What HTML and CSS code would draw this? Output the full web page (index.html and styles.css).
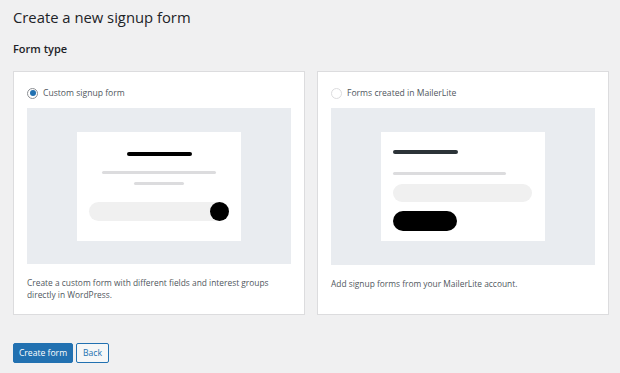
FILE: index.html
```html
<!DOCTYPE html>
<html lang="en">
<head>
<meta charset="utf-8">
<title>Create a new signup form</title>
<link rel="stylesheet" href="styles.css">
</head>
<body>
<div class="wrap">
  <h1 class="title">Create a new signup form</h1>
  <h2 class="subtitle">Form type</h2>
  <div class="cards">
    <label class="card">
      <span class="option"><span class="radio checked"></span><span class="option-label">Custom signup form</span></span>
      <span class="preview">
        <span class="mock mock-custom">
          <span class="bar bar-black"></span>
          <span class="bar bar-gray1"></span>
          <span class="bar bar-gray2"></span>
          <span class="pill-row"><span class="pill-dot"></span></span>
        </span>
      </span>
      <span class="desc">Create a custom form with different fields and interest groups directly in WordPress.</span>
    </label>
    <label class="card">
      <span class="option"><span class="radio"></span><span class="option-label">Forms created in MailerLite</span></span>
      <span class="preview">
        <span class="mock mock-ml">
          <span class="bar bar-dark"></span>
          <span class="bar bar-gray3"></span>
          <span class="pill-input"></span>
          <span class="pill-btn"></span>
        </span>
      </span>
      <span class="desc">Add signup forms from your MailerLite account.</span>
    </label>
  </div>
  <div class="actions">
    <button class="btn btn-primary" type="button">Create form</button>
    <button class="btn btn-secondary" type="button">Back</button>
  </div>
</div>
</body>
</html>
```
FILE: styles.css
```css
html, body {
  margin: 0;
  padding: 0;
  background: #f0f0f1;
}
body {
  font-family: "Open Sans", "Noto Sans", sans-serif;
  color: #1d2327;
}
.wrap {
  padding: 6px 13px 0 13px;
}
.title {
  margin: 0;
  font-size: 14.8px;
  font-weight: 400;
  line-height: 22px;
  color: #1d2327;
}
.subtitle {
  margin: 13px 0 0 0;
  font-size: 11px;
  font-weight: 600;
  line-height: 16px;
  color: #1d2327;
}
.cards {
  margin-top: 14px;
  display: grid;
  grid-template-columns: 292px 292px;
  column-gap: 12px;
}
.card {
  display: flex;
  flex-direction: column;
  background: #fff;
  border: 1px solid #dcdcde;
  padding: 13px;
  height: 244px;
  box-sizing: border-box;
}
.option {
  display: flex;
  align-items: center;
  gap: 5px;
  height: 16px;
}
.radio {
  width: 11px;
  height: 11px;
  box-sizing: border-box;
  border: 1px solid #dcdcde;
  border-radius: 50%;
  background: #fff;
  display: flex;
  align-items: center;
  justify-content: center;
}
.radio.checked {
  border-color: #8c8f94;
}
.radio.checked::after {
  content: "";
  width: 6px;
  height: 6px;
  border-radius: 50%;
  background: #2271b1;
}
.option-label {
  font-size: 8.6px;
  color: #50575e;
  line-height: 16px;
}
.preview {
  margin-top: 7px;
  height: 157px;
  background: #e9ecf0;
  display: flex;
  align-items: center;
  justify-content: center;
}
.mock {
  width: 164px;
  height: 109px;
  background: #fff;
  display: flex;
  flex-direction: column;
  box-sizing: border-box;
}
.mock-custom {
  align-items: center;
  padding-top: 20px;
}
.bar {
  display: block;
  border-radius: 2px;
}
.bar-black {
  width: 65px;
  height: 4px;
  background: #000;
}
.bar-gray1 {
  margin-top: 15px;
  width: 114px;
  height: 3px;
  background: #dcdcde;
}
.bar-gray2 {
  margin-top: 8px;
  width: 50px;
  height: 3px;
  background: #dcdcde;
}
.pill-row {
  margin-top: 17px;
  width: 140px;
  height: 19px;
  border-radius: 10px;
  background: #f0f0f0;
  display: flex;
  justify-content: flex-end;
}
.pill-dot {
  width: 19px;
  height: 19px;
  border-radius: 50%;
  background: #000;
}
.mock-ml {
  align-items: flex-start;
  padding: 18px 12px 0 12px;
}
.bar-dark {
  width: 65px;
  height: 4px;
  background: #2c3338;
}
.bar-gray3 {
  margin-top: 18px;
  width: 113px;
  height: 3px;
  background: #dcdcde;
}
.pill-input {
  display: block;
  margin-top: 9px;
  width: 139px;
  height: 18px;
  border-radius: 9px;
  background: #f0f0f0;
}
.pill-btn {
  display: block;
  margin-top: 9px;
  width: 64px;
  height: 20px;
  border-radius: 10px;
  background: #000;
}
.desc {
  margin-top: 13px;
  font-size: 8.4px;
  line-height: 12px;
  color: #50575e;
}
.actions {
  margin-top: 28px;
  display: flex;
  gap: 3px;
}
.btn {
  font-family: "Open Sans", "Noto Sans", sans-serif;
  font-size: 8.6px;
  height: 20px;
  padding: 0;
  border-radius: 2px;
  line-height: 18px;
  margin: 0;
  white-space: nowrap;
  text-align: center;
  cursor: pointer;
}
.btn-primary {
  background: #2271b1;
  border: 1px solid #2271b1;
  color: #fff;
  width: 60px;
}
.btn-secondary {
  background: #f6f7f7;
  border: 1px solid #2271b1;
  color: #2271b1;
  width: 33px;
}
```
